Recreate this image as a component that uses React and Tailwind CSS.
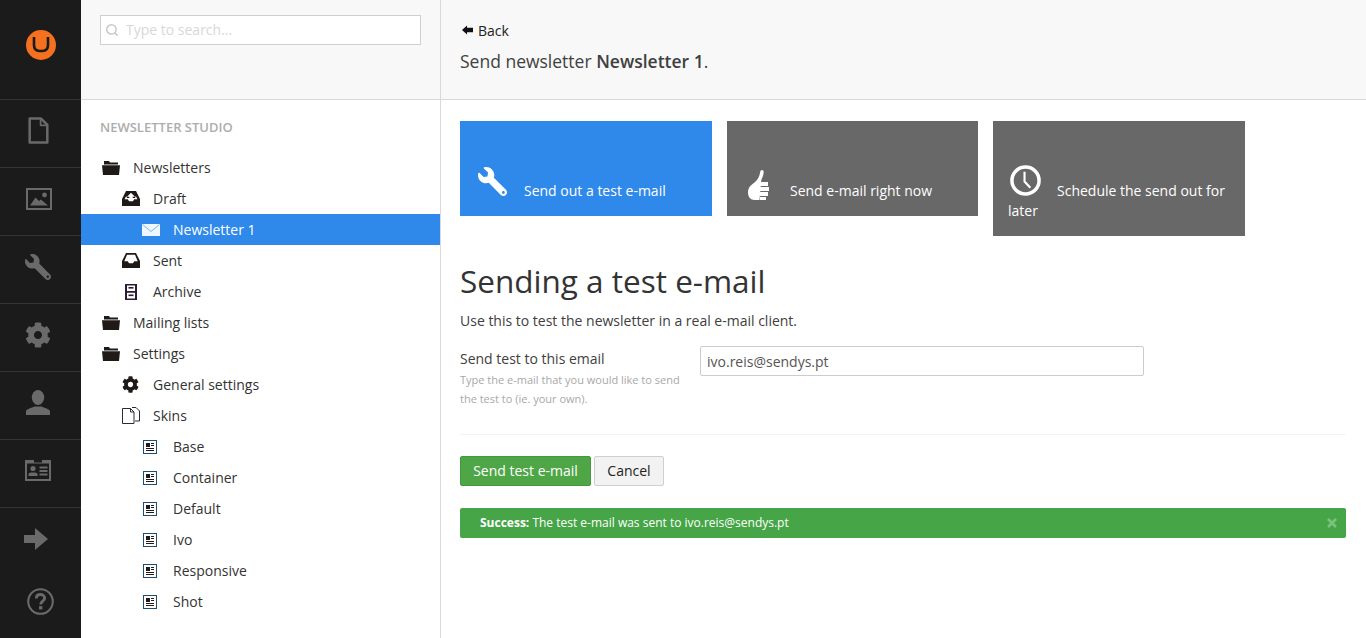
import React from 'react';
import { FaCog, FaWrench } from 'react-icons/fa';
import { Search } from 'lucide-react';

const DocIcon = ({ className }) => (
    <svg viewBox="0 0 20 26" className={className} fill="none" stroke="currentColor" strokeWidth="2.4" strokeLinejoin="round">
        <path d="M1.5 1.5H12.5L18.5 7.5V24.5H1.5Z" />
        <path d="M12 1.5V8H18.5" strokeWidth="1.6" />
    </svg>
);

const ImageIcon = ({ className }) => (
    <svg viewBox="0 0 26 22" className={className}>
        <rect x="1" y="1" width="24" height="20" fill="none" stroke="currentColor" strokeWidth="2" />
        <circle cx="18.5" cy="7" r="2.4" fill="currentColor" />
        <path d="M4 17.5L9.5 9.5L13 13L15 11.5L22 17.5Z" fill="currentColor" />
    </svg>
);

const UserIcon = ({ className }) => (
    <svg viewBox="0 0 24 25" className={className} fill="currentColor">
        <ellipse cx="12" cy="7.5" rx="6.2" ry="7.5" />
        <path d="M0 25V21.5C0 19 6 17.8 8.5 16.5H15.5C18 17.8 24 19 24 21.5V25Z" />
    </svg>
);

const CardIcon = ({ className }) => (
    <svg viewBox="0 0 26 21" className={className} fill="currentColor">
        <path fillRule="evenodd" d="M0 0H9V2.5H17V0H26V21H0ZM2 3.5V19H24V3.5Z" />
        <circle cx="8" cy="8.5" r="2.6" />
        <path d="M3.5 16V14C3.5 12.8 6 12.5 8 12.5S12.5 12.8 12.5 14V16Z" />
        <rect x="14.5" y="6.5" width="8" height="2" />
        <rect x="14.5" y="10" width="8" height="2" />
        <rect x="14.5" y="13.5" width="8" height="2" />
    </svg>
);

const ArrowIcon = ({ className }) => (
    <svg viewBox="0 0 24 22" className={className} fill="currentColor">
        <path d="M0 7H11V0L24 11L11 22V15H0Z" />
    </svg>
);

const HelpIcon = ({ className }) => (
    <svg viewBox="0 0 26 26" className={className}>
        <circle cx="13" cy="13" r="11.8" fill="none" stroke="currentColor" strokeWidth="2" />
        <path d="M9 10C9 7.6 10.8 6.3 13 6.3S17 7.7 17 9.8C17 12.6 13.2 12.8 13.2 15.8" fill="none" stroke="currentColor" strokeWidth="2.8" />
        <rect x="11.6" y="17.4" width="3.2" height="3.2" fill="currentColor" />
    </svg>
);

const FolderIcon = ({ className }) => (
    <svg viewBox="0 0 18 14" className={className} fill="#1f1a17">
        <path d="M2 0H7L8 1.5H16V3.5H2Z" />
        <path d="M0 4.2H18L17 14H1Z" />
    </svg>
);

const InboxIcon = ({ className, upload }) => (
    <svg viewBox="0 0 18 15" className={className}>
        {upload ? (
            <>
                <path fill="#1f1a17" d="M4 0H14L18 8V15H0V8Z" />
                <path fill="#fff" d="M2.6 8.2H5.8L7 10.2H11L12.2 8.2H15.4L13.8 5L13 7H5L4.2 5Z" />
                <path fill="#fff" d="M9 1.8L13 5.8H10.7V8.8H7.3V5.8H5Z" />
            </>
        ) : (
            <path fillRule="evenodd" fill="#1f1a17" d="M4 0H14L18 8V15H0V8ZM5 1.8L2.3 8.2H5.8L7 10.2H11L12.2 8.2H15.7L13 1.8Z" />
        )}
    </svg>
);

const CabinetIcon = ({ className }) => (
    <svg viewBox="0 0 12 16" className={className}>
        <path fillRule="evenodd" fill="#2a1a33" d="M0 0H12V16H0ZM2 1.5V7H10V1.5ZM2 8.8V14.5H10V8.8Z" />
        <rect x="3.5" y="3" width="5" height="1.6" fill="#2a1a33" />
        <rect x="3.5" y="10.5" width="5" height="1.6" fill="#2a1a33" />
    </svg>
);

const SkinsIcon = ({ className }) => (
    <svg viewBox="0 0 18 17" className={className} fill="none" stroke="#2a2a3a" strokeWidth="1">
        <path d="M.5 1.5H8.5L12 5V16.5H.5Z" />
        <path d="M8.5 1.5V5H12" />
        <path d="M10 .5H14L17.5 4V14H13" />
    </svg>
);

const NewsIcon = ({ className }) => (
    <svg viewBox="0 0 14 14" className={className}>
        <rect x=".5" y=".5" width="13" height="13" fill="#fff" stroke="#1d4f73" />
        <rect x="3" y="3" width="4" height="4" fill="#1f1a17" />
        <path d="M8 3.5H11M8 5.5H11M3 8.5H11M3 10.5H11" stroke="#1f1a17" />
    </svg>
);

const MailIcon = ({ className }) => (
    <svg viewBox="0 0 18 12" className={className}>
        <rect width="18" height="12" fill="#eef6fe" />
        <path d="M.5 .5L9 7.5L17.5 .5" fill="none" stroke="#7db6f1" strokeWidth="1" />
    </svg>
);

const ThumbIcon = ({ className }) => (
    <svg viewBox="0 0 21 30" className={className}>
        <path fill="#fff" d="M14 0C15.8 0 16 2.2 15.2 5C14.7 7 13.8 8.5 13.2 10.5L11.5 30H6.5C2.5 30 0 27 0 22.5C0 17.5 3 15 6.5 12.5C9.5 10 11.5 6.5 12 3C12.2 1.2 12.8 0 14 0Z" />
        <path fill="#fff" d="M11.5 12H20V16H11.5ZM12 17H21V21H12ZM12 22H20V26H12ZM12 27H18V30H12Z" />
    </svg>
);

const ClockIcon = ({ className }) => (
    <svg viewBox="0 0 32 32" className={className} fill="none" stroke="#fff">
        <circle cx="16" cy="16" r="14" strokeWidth="3.6" />
        <path d="M15 7V17L21 23.5" strokeWidth="2.2" />
    </svg>
);

const BackIcon = ({ className }) => (
    <svg viewBox="0 0 12 10" className={className} fill="#111">
        <path d="M0 5L5.5 0V2.6H12V7.4H5.5V10Z" />
    </svg>
);

const LogoIcon = () => (
    <div className="flex h-[30px] w-[30px] items-center justify-center rounded-full bg-[#f5701f]">
        <svg viewBox="0 0 18 17" className="h-[17px] w-[18px]" fill="none" stroke="#1b1b1b" strokeWidth="2.6">
            <path d="M2 1V9C2 13 4 15 7.5 15H10.5C14 15 16 13 16 9V1" />
        </svg>
    </div>
);

const navItems = [
    { key: 'doc', icon: <DocIcon className="h-[27px] w-[21px]" />, offset: 'mr-[5px]' },
    { key: 'image', icon: <ImageIcon className="h-[22px] w-[26px]" />, offset: 'mr-[3px]' },
    { key: 'wrench', icon: <FaWrench className="h-[26px] w-[26px] -scale-x-100" />, offset: 'mr-[5px]' },
    { key: 'cog', icon: <FaCog className="h-[26px] w-[26px]" />, offset: 'mr-[5px]' },
    { key: 'user', icon: <UserIcon className="h-[25px] w-[24px]" />, offset: 'mr-[5px]' },
    { key: 'card', icon: <CardIcon className="h-[21px] w-[26px]" />, offset: 'mr-[5px]' },
];

const tree = [
    { label: 'Newsletters', indent: 0, icon: <FolderIcon className="h-[14px] w-[18px]" /> },
    { label: 'Draft', indent: 1, icon: <InboxIcon upload className="h-[15px] w-[18px]" /> },
    { label: 'Newsletter 1', indent: 2, active: true, icon: <MailIcon className="h-[12px] w-[18px]" /> },
    { label: 'Sent', indent: 1, icon: <InboxIcon className="h-[15px] w-[18px]" /> },
    { label: 'Archive', indent: 1, icon: <CabinetIcon className="h-[16px] w-[12px]" /> },
    { label: 'Mailing lists', indent: 0, icon: <FolderIcon className="h-[14px] w-[18px]" /> },
    { label: 'Settings', indent: 0, icon: <FolderIcon className="h-[14px] w-[18px]" /> },
    { label: 'General settings', indent: 1, icon: <FaCog className="mr-[2px] h-[17px] w-[17px] text-[#1f1a17]" /> },
    { label: 'Skins', indent: 1, icon: <SkinsIcon className="h-[17px] w-[18px]" /> },
    { label: 'Base', indent: 2, icon: <NewsIcon className="mr-[2px] h-[14px] w-[14px]" /> },
    { label: 'Container', indent: 2, icon: <NewsIcon className="mr-[2px] h-[14px] w-[14px]" /> },
    { label: 'Default', indent: 2, icon: <NewsIcon className="mr-[2px] h-[14px] w-[14px]" /> },
    { label: 'Ivo', indent: 2, icon: <NewsIcon className="mr-[2px] h-[14px] w-[14px]" /> },
    { label: 'Responsive', indent: 2, icon: <NewsIcon className="mr-[2px] h-[14px] w-[14px]" /> },
    { label: 'Shot', indent: 2, icon: <NewsIcon className="mr-[2px] h-[14px] w-[14px]" /> },
];

const indentClass = ['pl-[20px]', 'pl-[40px]', 'pl-[60px]'];

const NavBar = () => (
    <aside className="flex h-full w-[81px] shrink-0 flex-col bg-[#1b1b1b] text-[#6a6a6a]">
        <div className="flex h-[100px] items-center justify-center border-b border-[#343434] pb-[10px]">
            <LogoIcon />
        </div>
        {navItems.map((item) => (
            <div key={item.key} className="flex h-[68px] items-center justify-center border-b border-[#343434] pb-[6px]">
                <div className={`flex items-center justify-center ${item.offset}`}>{item.icon}</div>
            </div>
        ))}
        <div className="flex h-[62px] items-center justify-center pr-[9px]">
            <ArrowIcon className="h-[22px] w-[24px]" />
        </div>
        <div className="flex h-[62px] items-center justify-center">
            <HelpIcon className="h-[27px] w-[27px]" />
        </div>
    </aside>
);

const TreePanel = () => (
    <section className="flex h-full w-[360px] shrink-0 flex-col border-r border-[#d9d9d9] bg-white">
        <div className="h-[100px] shrink-0 border-b border-[#d9d9d9] bg-[#f8f8f8] pl-[19px] pr-[19px] pt-[15px]">
            <div className="flex h-[30px] w-[321px] items-center border border-[#cfcfcf] bg-white pb-[2px] pl-[4px]">
                <Search className="mt-[2px] h-[14px] w-[14px] text-[#c8c8c8]" strokeWidth={2.5} />
                <span className="ml-[7px] text-[14px] text-[#d8d8d8]">Type to search...</span>
            </div>
        </div>
        <h5 className="mt-[18px] h-[18px] pl-[19px] text-[13px] font-semibold uppercase leading-[18px] text-[#adadad]">Newsletter Studio</h5>
        <ul className="mt-[16px]">
            {tree.map((row) => (
                <li
                    key={row.label}
                    className={`flex h-[31px] items-center text-[14px] ${indentClass[row.indent]} ${row.active ? 'bg-[#2e89ea] text-white' : 'text-[#333]'}`}
                >
                    <span className="flex w-[20px] items-center justify-center">{row.icon}</span>
                    <span className="ml-[12px]">{row.label}</span>
                </li>
            ))}
        </ul>
    </section>
);

const ActionCard = ({ tall, active, narrow, children }) => (
    <div className={`flex shrink-0 flex-col justify-end px-[15px] pb-[15px] text-[14px] text-white ${narrow ? 'w-[251px]' : 'w-[252px]'} ${tall ? 'h-[115px]' : 'h-[95px]'} ${active ? 'bg-[#2e89ea]' : 'bg-[#686868]'}`}>
        {children}
    </div>
);

const App = () => (
    <div className="flex h-[638px] w-[1366px] overflow-hidden bg-white font-['Open_Sans',sans-serif] text-[#333]">
        <NavBar />
        <TreePanel />
        <main className="flex min-w-0 flex-1 flex-col">
            <header className="h-[100px] shrink-0 border-b border-[#d9d9d9] bg-[#f8f8f8] pl-[19px] pt-[20px]">
                <div className="flex h-[20px] items-center text-[14px] text-[#222]">
                    <BackIcon className="ml-[2px] h-[10px] w-[11px]" />
                    <span className="ml-[5px]">Back</span>
                </div>
                <p className="mt-[9px] text-[17.5px] leading-[24px] text-[#404040]">
                    Send newsletter <strong className="font-semibold">Newsletter 1</strong>.
                </p>
            </header>
            <div className="flex flex-col pl-[19px] pr-[20px]">
                <div className="mt-[21px] flex items-start gap-[15px]">
                    <ActionCard active>
                        <div className="flex items-end">
                            <FaWrench className="mb-[5px] ml-[3px] h-[29px] w-[29px] -scale-x-100 text-white" />
                            <span className="ml-[17px] leading-[20px]">Send out a test e-mail</span>
                        </div>
                    </ActionCard>
                    <ActionCard narrow>
                        <div className="flex items-end">
                            <ThumbIcon className="mb-[1px] ml-[6px] h-[30px] w-[21px]" />
                            <span className="ml-[21px] leading-[20px]">Send e-mail right now</span>
                        </div>
                    </ActionCard>
                    <ActionCard tall>
                        <div className="leading-[20px]">
                            <ClockIcon className="ml-[2px] mr-[16px] inline-block h-[31px] w-[31px] align-baseline" />
                            Schedule the send out for later
                        </div>
                    </ActionCard>
                </div>
                <h1 className="mt-[24px] text-[31.5px] font-normal leading-[42px] text-[#333]">Sending a test e-mail</h1>
                <p className="mt-[9px] text-[14px] leading-[20px] text-[#404040]">Use this to test the newsletter in a real e-mail client.</p>
                <div className="mt-[15px] flex items-start">
                    <div className="w-[240px] shrink-0 pt-[3px]">
                        <div className="text-[14px] leading-[20px] text-[#404040]">Send test to this email</div>
                        <div className="mt-px w-[225px] text-[11px] leading-[19px] text-[#a8a8a8]">Type the e-mail that you would like to send the test to (ie. your own).</div>
                    </div>
                    <div className="flex h-[30px] w-[444px] items-center rounded-[2px] border border-[#ccc] bg-white px-[6px] text-[14px] text-[#555]">ivo.reis@sendys.pt</div>
                </div>
                <div className="mt-[26px] h-px bg-[#f3f3f3]" />
                <div className="mt-[21px] flex gap-[3px]">
                    <button className="flex h-[30px] w-[131px] items-center justify-center rounded-[2px] border border-[#46963f] bg-[#4ea646] pb-[2px] text-[14px] text-white">Send test e-mail</button>
                    <button className="flex h-[30px] w-[70px] items-center justify-center rounded-[2px] border border-[#cfcfcf] bg-[#f2f2f2] pb-[2px] text-[14px] text-[#222]">Cancel</button>
                </div>
                <div className="mt-[22px] flex h-[30px] items-center justify-between rounded-[2px] bg-[#46a546] pl-[20px] pr-[9px] text-[12px] text-white">
                    <span><strong className="font-bold">Success:</strong> The test e-mail was sent to ivo.reis@sendys.pt</span>
                    <svg viewBox="0 0 10 10" className="h-[10px] w-[10px]" stroke="#7cc27c" strokeWidth="2.6">
                        <path d="M1 1L9 9M9 1L1 9" />
                    </svg>
                </div>
            </div>
        </main>
    </div>
);

export default App;
